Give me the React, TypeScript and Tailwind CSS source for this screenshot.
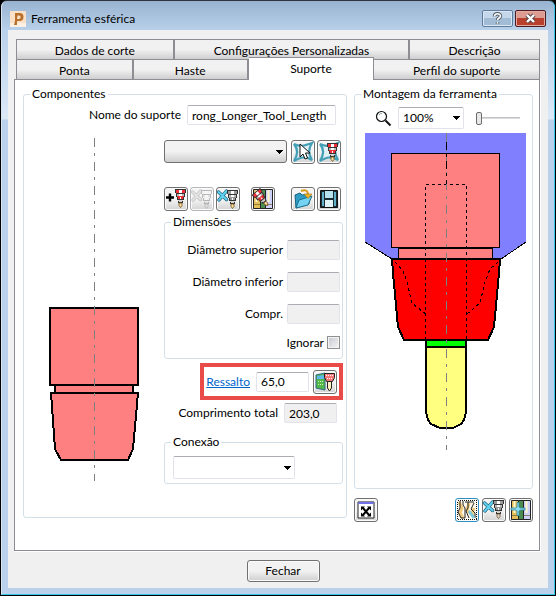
import React from 'react';
import clsx from 'clsx';

interface GroupProps {
  title: string;
  className?: string;
  children: React.ReactNode;
}

const Group: React.FC<GroupProps> = ({ title, className, children }) => (
  <fieldset className={clsx('min-w-0 rounded-[3px] border border-[#d5dfe8]', className)}>
    <legend className="ml-1.5 h-4 px-0.5 leading-4">{title}</legend>
    {children}
  </fieldset>
);

interface IconButtonProps {
  label: string;
  active?: boolean;
  disabled?: boolean;
  className?: string;
  children: React.ReactNode;
}

const IconButton: React.FC<IconButtonProps> = ({ label, active, disabled, className, children }) => (
  <button
    type="button"
    aria-label={label}
    disabled={disabled}
    className={clsx(
      'flex size-6 shrink-0 items-center justify-center rounded-[3px] border bg-linear-to-b from-[#f4f4f4] from-50% to-[#d4d4d4] shadow-[inset_0_0_0_1px_#fbfbfb]',
      active ? 'border-[#2f8fc0]' : disabled ? 'border-[#b4b8bc]' : 'border-[#707070]',
      className
    )}
  >
    <svg width="22" height="22" viewBox="0 0 22 22" aria-hidden="true" className={clsx(disabled && 'opacity-30 grayscale')}>
      {children}
    </svg>
  </button>
);

interface FieldProps {
  id: string;
  label: string;
}

const DimensionField: React.FC<FieldProps> = ({ id, label }) => (
  <div className="flex items-center justify-end gap-1">
    <label htmlFor={id}>{label}</label>
    <input
      id={id}
      type="text"
      disabled
      className="h-5 w-[53px] rounded-[2px] border border-[#e2e3ea] border-t-[#abadb3] bg-[#f0f0f0] px-1"
    />
  </div>
);

const Arrow = () => (
  <svg
    width="7"
    height="4"
    viewBox="0 0 7 4"
    aria-hidden="true"
    shapeRendering="crispEdges"
    className="pointer-events-none absolute inset-y-0 right-1 my-auto"
  >
    <path d="M0 0h7v1h-1v1h-1v1h-1v1h-1v-1h-1v-1h-1v-1h-1z" />
  </svg>
);

interface DrillProps {
  x?: number;
  y?: number;
  red?: string;
  tip?: string;
}

/* Small holder with its tool, shared by most of the toolbar buttons */
const Drill: React.FC<DrillProps> = ({ x = 0, y = 0, red = '#f03038', tip = '#ffe0a0' }) => (
  <g transform={`translate(${x} ${y})`}>
    <path d="M0 0h11v4h-1v4H9v3H8v3H3v-3H2V8H1V4H0z" fill="#333" />
    <path d="M1 1h9v3H1z" fill={red} />
    <path d="M4 1h3v3H4z" fill="#fff" />
    <path d="M2 5h7v2H2z" fill="#b8b8b8" />
    <path d="M4 5h3v2H4z" fill="#fff" />
    <path d="M2 7h7v1H2zM3 8h5v2H3z" fill={red} />
    <path d="M5 8h1v2H5z" fill="#fff" />
    <path d="M3 11h5v1H3zM4 12h3v1H4z" fill="#d4d4d4" />
    <path d="M4 14v2.500l1.500 2 1.500-2V14z" fill={tip} stroke="#6a4a18" strokeWidth=".8" />
  </g>
);

const Star = () => (
  <path
    d="M2 3c6 3 10 2 18-1-4 6-4 11 0 17-7-4-11-3-18 1 4-6 4-12 0-17z"
    fill="#e0f0f3"
    stroke="#439fb6"
    strokeWidth="2.200"
  />
);

const Cross = () => (
  <>
    <path d="M1.500 4l8 7.500M9.500 3C7 6 5 8 2 12" fill="none" stroke="#176282" strokeWidth="3.400" strokeLinecap="round" />
    <path d="M1.500 4l8 7.500M9.500 3C7 6 5 8 2 12" fill="none" stroke="#62d2ee" strokeWidth="2" strokeLinecap="round" />
  </>
);

const Binders = () => (
  <g stroke="#222">
    <path d="M1.500 1.500h7v19h-7z" fill="#e3bf5c" />
    <path d="M8.500 1.500h5v19h-5z" fill="#4c8c50" />
    <path d="M13.500 1.500h7v19h-7z" fill="#cfd0f6" />
    <path d="M4.500 2v12M16.500 2v12" stroke="#fff6c8" strokeWidth="2" />
    <path d="M2 16.500h6M14 16.500h6" stroke="#706030" strokeWidth=".7" />
  </g>
);

const HolderDrawing = () => (
  <svg width="101" height="343" viewBox="0 0 101 343" role="img" aria-label="Suporte">
    <g fill="#ff8080" stroke="#000" strokeWidth="2" shapeRendering="crispEdges">
      <path d="M11 247h78v8H11z" />
      <path d="M6 170h88v77H6z" />
      <path d="M7 255h87l-5 56-5 11H17l-6-11z" />
    </g>
    <path d="M50.500 0v343" stroke="#808080" strokeDasharray="9 6 3 6" />
  </svg>
);

const AssemblyDrawing = () => (
  <svg width="161" height="317" viewBox="0 0 161 317" role="img" aria-label="Montagem da ferramenta">
    <path d="M0 0h161v109l-25 17H27L0 109z" fill="#8080ff" />
    <path d="M0 109l27 17M161 109l-25 17" stroke="#000" shapeRendering="crispEdges" />
    <g stroke="#000" shapeRendering="crispEdges">
      <path d="M26.500 20.500h108v94h-108z" fill="#ff8080" />
      <path d="M33.500 115.500h94v10h-94z" fill="#ff8080" />
      <path d="M27 126h108l-1 14-5 54-6 13H39l-6-13-5-54z" fill="#f00" strokeWidth="2" />
      <path d="M61 207h40v7H61z" fill="#0f0" strokeWidth="2" />
      <path d="M61 214h40v65l-2 8-3 4-8 4H75l-9-4-3-4-2-8z" fill="#ffff80" strokeWidth="2" />
    </g>
    <g fill="none" stroke="#000" strokeDasharray="3 3" shapeRendering="crispEdges">
      <path d="M60.500 207V51.500h41V207" />
      <path d="M30 129l8 9 4 11 5 21 6 5 8 6M133 129l-8 7-5 13-5 21-13 11" />
    </g>
    <path d="M81.500 0v317" stroke="#808080" strokeDasharray="9 6 3 6" />
    <path d="M81.500 9v42" stroke="#000" strokeDasharray="8 4 3 4" />
  </svg>
);

const tabClass =
  'h-5 border-t border-r-2 border-[#8c8e94] bg-linear-to-b from-[#f1f1f1] from-50% to-[#cfcfcf] pt-0.5 leading-4 last:border-r';

const App: React.FC = () => {
  return (
    <div className="bg-black">
      <div className="rounded-t-[7px] border-t border-r border-b border-l border-t-[#30343a] border-r-black border-b-black border-l-black bg-[linear-gradient(#98b3d1,#b9d1ea_30px,#dce9f7_118px,#b9d1ea_119px)] font-['Lato','Open_Sans',sans-serif] text-xs text-black">
        <div className="rounded-t-[6px] border-r border-b border-l border-l-[#d8e6f4] border-r-[#36c5e8] border-b-[#36c5e8] px-1.5 pb-1.5">
          {/* Title bar */}
          <header className="flex h-[29px] items-center gap-[5px] px-0.5 pt-1.5">
            <svg width="16" height="16" viewBox="0 0 16 16" aria-hidden="true">
              <path d="M0 0h16v16H0z" fill="#fae0c6" />
              <path d="M0 12h16v4H0z" fill="#fff" opacity=".5" />
              <path d="M5 2h4.500a4 4 0 010 8H7v4H4l1-4zM7.500 4.500L7 8h2.200a1.800 1.800 0 000-3.500z" fill="#b8702c" fillRule="evenodd" />
            </svg>
            <h1 className="flex-1">Ferramenta esférica</h1>
            <div className="flex gap-0.5">
              <button
                type="button"
                aria-label="Ajuda"
                className="flex h-[17px] w-[31px] items-center justify-center rounded-[2px] border border-[#607c9c] bg-linear-to-b from-[#c5d7ea] from-50% to-[#a3bcd6] to-50% shadow-[inset_0_0_0_1px_#dbe7f4]"
              >
                <svg width="11" height="13" viewBox="0 0 11 13" fill="none" aria-hidden="true">
                  <path d="M2.500 4.500C2.500 1 8.500 1 8.500 4c0 2-3 2-3 4M5.500 10v1.500" stroke="#4a5560" strokeWidth="3.400" />
                  <path d="M2.500 4.500C2.500 1 8.500 1 8.500 4c0 2-3 2-3 4M5.500 10v1.500" stroke="#fff" strokeWidth="1.600" />
                </svg>
              </button>
              <button
                type="button"
                aria-label="Fechar janela"
                className="flex h-[17px] w-[31px] items-center justify-center rounded-[2px] border border-[#4e1b20] bg-linear-to-b from-[#dc9c92] from-45% to-[#b9402c] to-50% shadow-[inset_0_0_0_1px_#e4aaa2]"
              >
                <svg width="13" height="11" viewBox="0 0 13 11" aria-hidden="true">
                  <path d="M3 2l7 7M10 2L3 9" stroke="#56494d" strokeWidth="4.400" />
                  <path d="M3 2l7 7M10 2L3 9" stroke="#fff" strokeWidth="2.400" />
                </svg>
              </button>
            </div>
          </header>

          <main className="bg-[#f0f0f0] pt-[9px] pr-2 pb-1.5 pl-1.5">
            {/* Tabs */}
            <div role="tablist" className="ml-0.5">
              <div className="grid grid-cols-[158fr_236fr_130fr] border-l border-[#8c8e94]">
                <button type="button" role="tab" className={tabClass}>Dados de corte</button>
                <button type="button" role="tab" className={tabClass}>Configurações Personalizadas</button>
                <button type="button" role="tab" className={tabClass}>Descrição</button>
              </div>
              <div className="grid grid-cols-[117fr_115fr_126fr_166fr] border-l border-[#8c8e94]">
                <button type="button" role="tab" className={tabClass}>Ponta</button>
                <button type="button" role="tab" className={tabClass}>Haste</button>
                <button
                  type="button"
                  role="tab"
                  aria-selected="true"
                  className="relative z-10 -mt-0.5 -mb-px h-[23px] border-t border-r border-[#8c8e94] bg-white leading-4"
                >
                  Suporte
                </button>
                <button type="button" role="tab" className={tabClass}>Perfil do suporte</button>
              </div>
            </div>

            <div className="flex gap-[7px] border border-[#8c8e94] bg-white pt-1.5 pr-1.5 pb-7 pl-2 shadow-[1px_1px_0_#fff]">
              <Group title="Componentes" className="flex-1 self-start pb-[33px]">
                <div className="flex items-center justify-end gap-1.5 pt-[3px] pr-[10px]">
                  <label htmlFor="holder-name">Nome do suporte</label>
                  <input
                    id="holder-name"
                    type="text"
                    defaultValue="rong_Longer_Tool_Length"
                    className="h-5 w-[149px] rounded-[2px] border border-[#e2e3ea] border-t-[#abadb3] px-1"
                  />
                </div>

                <div className="mt-[13px] flex">
                  <div className="flex flex-1 justify-center">
                    <HolderDrawing />
                  </div>

                  <div className="mt-0.5 mr-[3px] w-[179px]">
                    <div className="flex gap-0.5">
                      <div className="relative mr-0.5 w-[123px]">
                        <select
                          aria-label="Componente do suporte"
                          className="block h-[23px] w-full appearance-none rounded-[3px] border border-[#707070] bg-linear-to-b from-[#f2f2f2] from-50% to-[#cfcfcf] px-1"
                        >
                          <option></option>
                        </select>
                        <Arrow />
                      </div>
                      <IconButton label="Selecionar suporte">
                        <Star />
                        <path d="M8 3v13l3-3 2 5 2.500-1-2-5H18z" fill="#fff" stroke="#111" />
                      </IconButton>
                      <IconButton label="Carregar suporte da ferramenta">
                        <Star />
                        <Drill x={9} y={2} />
                      </IconButton>
                    </div>

                    {/* Toolbar */}
                    <div className="mt-[23px] flex gap-0.5">
                      <IconButton label="Adicionar componente">
                        <path d="M1 9.500h8M5 5.500v8" stroke="#000" strokeWidth="2.400" />
                        <Drill x={10} y={1} />
                      </IconButton>
                      <IconButton label="Remover componente" disabled>
                        <Cross />
                        <Drill x={10} y={2} red="#eee" />
                      </IconButton>
                      <IconButton label="Limpar suporte">
                        <Cross />
                        <Drill x={10} y={2} red="#999" />
                      </IconButton>
                      <IconButton label="Adicionar ao banco de dados" className="ml-[9px]">
                        <Binders />
                        <g transform="rotate(-40 10 10)">
                          <Drill x={4} y={1} />
                        </g>
                      </IconButton>
                      <IconButton label="Abrir suporte" className="ml-3.5">
                        <path d="M3 7l5-2 2 2 7-1v10l-13 4z" fill="#2f9cc6" stroke="#17617c" />
                        <path d="M4 20l3-8 13-4-4 9z" fill="#74d3f2" stroke="#1b6d8b" />
                        <path d="M9 3c5-2 7 0 7 4" fill="none" stroke="#d99a1c" strokeWidth="2" />
                        <path d="M12 6h8l-4 4.500z" fill="#f0b428" stroke="#a87410" strokeWidth=".6" />
                      </IconButton>
                      <IconButton label="Salvar suporte">
                        <path d="M2.500 2.500h17v17h-17z" fill="#1c2a31" stroke="#111" />
                        <path d="M4 4h2v14H4zM16 4h2v14h-2z" fill="#5fb0c8" />
                        <path d="M7 3h8v7H7z" fill="#b4e2ee" />
                        <path d="M7 12h8v7H7z" fill="#e3f4f8" />
                      </IconButton>
                    </div>

                    <Group title="Dimensões" className="mt-[3px] pr-0.5 pb-[9px]">
                      <div className="flex flex-col gap-3 pt-[10px]">
                        <DimensionField id="upper-diameter" label="Diâmetro superior" />
                        <DimensionField id="lower-diameter" label="Diâmetro inferior" />
                        <DimensionField id="length" label="Compr." />
                        <label className="flex h-[13px] items-center justify-end gap-[3px]">
                          Ignorar
                          <input
                            type="checkbox"
                            className="size-[13px] appearance-none border border-[#8e8f8f] bg-linear-to-br from-[#c4c8d0] to-[#f6f6f6] shadow-[inset_0_0_0_1px_#f4f4f4]"
                          />
                        </label>
                      </div>
                    </Group>

                    <div className="mt-1 ml-auto flex h-[37px] w-[143px] items-center justify-end border-4 border-[#e94b48] pr-0.5">
                      <a href="#ressalto" className="text-[#0066cc] underline">Ressalto</a>
                      <input
                        type="text"
                        aria-label="Ressalto"
                        defaultValue="65,0"
                        className="mr-1 ml-1.5 h-5 w-[53px] rounded-[2px] border border-[#e2e3ea] border-t-[#abadb3] px-1"
                      />
                      <IconButton label="Calcular ressalto">
                        <path d="M2 4l9-2v17l-9-2z" fill="#54b848" stroke="#2b6788" />
                        <path d="M3 5l7-1v4H3z" fill="#5eb8ec" />
                        <path d="M4 10.500h5M4 13.500h5" stroke="#d9f4c8" strokeDasharray="1 1" />
                        <path d="M10.500 2.500h10v4l-2 4h-6l-2-4z" fill="#f47878" stroke="#222" />
                        <path d="M12 4.500h7M13 7.500h5" stroke="#fff" strokeDasharray="1 1" />
                        <path d="M13.500 10.500h4V17l-2 3-2-3z" fill="#fff2c0" stroke="#222" />
                      </IconButton>
                    </div>

                    <div className="mt-[3px] flex items-center justify-end gap-1.5 pr-1.5">
                      <label htmlFor="total-length">Comprimento total</label>
                      <input
                        id="total-length"
                        type="text"
                        readOnly
                        value="203,0"
                        className="h-5 w-[53px] rounded-[2px] border border-[#e2e3ea] border-t-[#abadb3] bg-[#f0f0f0] px-1"
                      />
                    </div>

                    <Group title="Conexão" className="mt-[11px] pb-1">
                      <div className="relative mt-1.5 ml-2 w-[122px]">
                        <select
                          aria-label="Conexão"
                          className="block h-[23px] w-full appearance-none rounded-[2px] border border-[#e2e3ea] border-t-[#abadb3] bg-white px-1"
                        >
                          <option></option>
                        </select>
                        <Arrow />
                      </div>
                    </Group>
                  </div>
                </div>
              </Group>

              <div className="w-[179px] shrink-0">
                <Group title="Montagem da ferramenta" className="pb-[38px]">
                  <div className="flex items-center pt-[5px] pl-5">
                    <svg width="17" height="17" viewBox="0 0 17 17" aria-hidden="true">
                      <circle cx="6.500" cy="6.500" r="5" fill="#fff" stroke="#111" strokeWidth="1.200" />
                      <path d="M4 5a3 3 0 013-1.500" fill="none" stroke="#9aa" />
                      <path d="M10.500 10.500l5 5" stroke="#111" strokeWidth="2" />
                    </svg>
                    <div className="relative ml-1.5 w-[66px]">
                      <select
                        aria-label="Zoom"
                        className="block h-[22px] w-full appearance-none rounded-[2px] border border-[#e2e3ea] border-t-[#abadb3] bg-white px-1"
                      >
                        <option>100%</option>
                      </select>
                      <Arrow />
                    </div>
                    <input
                      type="range"
                      aria-label="Nível de zoom"
                      min="0"
                      max="100"
                      defaultValue="0"
                      className="ml-3 h-4 w-11 appearance-none bg-[linear-gradient(#b5b8bb,#e4e6e8)] bg-size-[100%_2px] bg-center bg-no-repeat [&::-webkit-slider-thumb]:h-[13px] [&::-webkit-slider-thumb]:w-1.5 [&::-webkit-slider-thumb]:appearance-none [&::-webkit-slider-thumb]:rounded-[2px] [&::-webkit-slider-thumb]:border [&::-webkit-slider-thumb]:border-[#6c6c6c] [&::-webkit-slider-thumb]:bg-[#e8e8e8]"
                    />
                  </div>
                  <div className="mt-1 ml-2.5">
                    <AssemblyDrawing />
                  </div>
                </Group>

                <div className="mt-[9px] flex gap-[3px]">
                  <IconButton label="Ajustar à janela" className="mr-auto">
                    <path d="M3 3h16v16H3z" fill="#fff" stroke="#222" />
                    <path d="M3.500 3h15v2h-15z" fill="#7070e8" />
                    <path d="M8 9l6 7M14 9l-6 7" stroke="#000" strokeWidth="2" />
                    <path d="M6 7.500h4l-4 4zM16 7.500v4l-4-4zM6 17.500v-4l4 4zM16 17.500h-4l4-4z" />
                  </IconButton>
                  <IconButton label="Mostrar ferramenta" active className="shadow-[inset_0_0_0_1px_#5cc8ee]">
                    <path d="M1 1h20v20H1z" fill="#fffaf0" />
                    <path d="M3 3l3 6-2 5 3 5M13 4l-2 7 4 4M18 9l-2 5 2 5" fill="none" stroke="#f0c878" strokeWidth="3" />
                    <path d="M4 2v7l-2 4 3 6h4V9L7 6V2M9 3h9M12 3v6l-2 3 3 7M18 4l-3 6 4 4v5" fill="none" stroke="#222" />
                    <path d="M13 12l5 7" stroke="#7ccbe2" strokeWidth="3" />
                    <path d="M1.500 1.500h19v19h-19z" fill="none" stroke="#111" strokeDasharray="1 1" shapeRendering="crispEdges" />
                  </IconButton>
                  <IconButton label="Limpar ferramenta">
                    <Cross />
                    <Drill x={10} y={1} red="#999" tip="#ddd" />
                  </IconButton>
                  <IconButton label="Adicionar ferramenta ao banco de dados">
                    <Binders />
                    <path d="M7 3.500h2V8l1.500 1H15v2h-4.500L9 12v4.500H7V12l-1.500-1H1V9h4.500L7 8z" fill="#8cdcf2" stroke="#2a86a0" strokeWidth=".8" />
                  </IconButton>
                </div>
              </div>
            </div>

            <div className="mt-[9px] flex justify-center pl-3">
              <button
                type="button"
                className="h-[22px] w-[73px] rounded-[3px] border border-[#707070] bg-linear-to-b from-[#f2f2f2] from-50% to-[#cfcfcf] leading-5 shadow-[inset_0_0_0_1px_#fbfbfb]"
              >
                Fechar
              </button>
            </div>
          </main>
        </div>
      </div>
    </div>
  );
};

export default App;
